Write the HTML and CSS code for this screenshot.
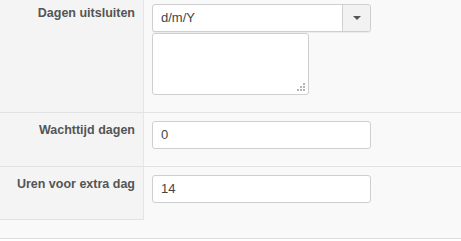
FILE: index.html
```html
<!DOCTYPE html>
<html lang="nl">
<head>
    <meta charset="UTF-8">
    <meta name="viewport" content="width=device-width, initial-scale=1.0">
    <title>Instellingen</title>
    <link rel="stylesheet" href="styles.css">
</head>
<body>
    <div class="settings">
        <div class="row">
            <div class="label">Dagen uitsluiten</div>
            <div class="field">
                <div class="select">
                    <span class="select-value">d/m/Y</span>
                    <span class="select-arrow"><span class="caret"></span></span>
                </div>
                <div class="textarea">
                    <svg class="grip" width="8" height="8" viewBox="0 0 8 8">
                        <rect x="6" y="0" width="2" height="2" fill="#b5b5b5"/>
                        <rect x="3" y="3" width="2" height="2" fill="#b5b5b5"/>
                        <rect x="6" y="3" width="2" height="2" fill="#b5b5b5"/>
                        <rect x="0" y="6" width="2" height="2" fill="#b5b5b5"/>
                        <rect x="3" y="6" width="2" height="2" fill="#b5b5b5"/>
                        <rect x="6" y="6" width="2" height="2" fill="#b5b5b5"/>
                    </svg>
                </div>
            </div>
        </div>
        <div class="row">
            <div class="label">Wachttijd dagen</div>
            <div class="field">
                <div class="input">0</div>
            </div>
        </div>
        <div class="row last">
            <div class="label">Uren voor extra dag</div>
            <div class="field">
                <div class="input">14</div>
            </div>
        </div>
    </div>
</body>
</html>
```

FILE: styles.css
```css
body {
    margin: 0;
    padding: 0;
    background-color: #fff;
    font-family: "Liberation Sans", Arial, sans-serif;
    font-size: 12.5px;
    color: #555;
}
.settings {
    margin-top: -5px;
    padding-bottom: 18px;
    background-color: #f9f9f9;
    border-bottom: 1px solid #dcdcdc;
}
.row {
    display: flex;
    border-top: 1px solid #e2e2e2;
}
.label {
    width: 135px;
    padding: 8px 8px 17px 0;
    text-align: right;
    font-weight: bold;
    line-height: 18px;
    color: #555;
    background-color: #f4f4f4;
    border-right: 1px solid #e6e6e6;
}
.row.last .label {
    border-bottom: 1px solid #e2e2e2;
}
.field {
    flex: 1;
    padding: 8px 8px 17px 8px;
}
.select {
    display: flex;
    width: 217px;
    height: 26px;
    border: 1px solid #cfcfcf;
    border-radius: 3px;
    background-color: #fff;
    box-shadow: 0 1px 1px rgba(0,0,0,0.06);
}
.select-value {
    flex: 1;
    padding-left: 8px;
    font-size: 13px;
    line-height: 26px;
    color: #444;
}
.select-arrow {
    width: 27px;
    display: flex;
    align-items: center;
    justify-content: center;
    background-color: #f2f2f2;
    border-left: 1px solid #cfcfcf;
    border-radius: 0 3px 3px 0;
}
.caret {
    width: 0;
    height: 0;
    border-left: 4px solid transparent;
    border-right: 4px solid transparent;
    border-top: 4px solid #555;
}
.textarea {
    position: relative;
    width: 155px;
    height: 60px;
    margin-top: 1px;
    border: 1px solid #cfcfcf;
    border-radius: 3px;
    background-color: #fff;
}
.grip {
    position: absolute;
    right: 3px;
    bottom: 3px;
}
.input {
    width: 209px;
    height: 26px;
    padding-left: 8px;
    font-size: 13px;
    line-height: 26px;
    border: 1px solid #cfcfcf;
    border-radius: 3px;
    background-color: #fff;
    color: #444;
}
```
